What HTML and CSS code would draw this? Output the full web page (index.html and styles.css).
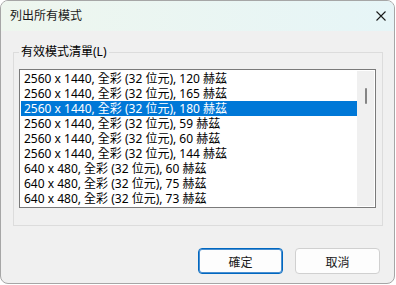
FILE: index.html
```html
<!DOCTYPE html>
<html lang="zh-Hant">
<head>
    <meta charset="UTF-8">
    <title>列出所有模式</title>
    <link rel="stylesheet" href="styles.css">
</head>
<body>
    <div class="window">
        <div class="titlebar">
            <span class="title">列出所有模式</span>
            <svg class="close" width="10" height="10" viewBox="0 0 10 10"><path d="M0.5 0.5L9.5 9.5M9.5 0.5L0.5 9.5" stroke="#1a1a1a" stroke-width="1.1" fill="none"/></svg>
        </div>
        <div class="content">
            <fieldset class="group">
                <legend>有效模式清單(L)</legend>
                <div class="listbox">
                    <div class="rows">
                        <div class="row">2560 x 1440, 全彩 (32 位元), 120 赫茲</div>
                        <div class="row">2560 x 1440, 全彩 (32 位元), 165 赫茲</div>
                        <div class="row selected">2560 x 1440, 全彩 (32 位元), 180 赫茲</div>
                        <div class="row">2560 x 1440, 全彩 (32 位元), 59 赫茲</div>
                        <div class="row">2560 x 1440, 全彩 (32 位元), 60 赫茲</div>
                        <div class="row">2560 x 1440, 全彩 (32 位元), 144 赫茲</div>
                        <div class="row">640 x 480, 全彩 (32 位元), 60 赫茲</div>
                        <div class="row">640 x 480, 全彩 (32 位元), 75 赫茲</div>
                        <div class="row">640 x 480, 全彩 (32 位元), 73 赫茲</div>
                    </div>
                    <div class="scrollbar"><div class="thumb"></div></div>
                </div>
            </fieldset>
            <div class="buttons">
                <button class="btn primary">確定</button>
                <button class="btn">取消</button>
            </div>
        </div>
    </div>
</body>
</html>
```

FILE: styles.css
```css
body { margin: 0; background: #ffffff; font-family: "Noto Sans", "Noto Sans CJK TC", sans-serif; font-size: 12px; color: #000; }
.window { width: 395px; height: 284px; box-sizing: border-box; border: 1px solid #a6a6a6; border-radius: 8px; overflow: hidden; background: #f0f0f0; display: flex; flex-direction: column; }
.titlebar { height: 30px; flex: none; display: flex; align-items: center; justify-content: space-between; padding: 0 8px 0 9px; background: linear-gradient(90deg, #eef6ee, #e6f5f7); }
.title { font-size: 12px; color: #1a1a1a; line-height: 16px; }
.close { display: block; }
.content { flex: 1; padding: 13px 11px 0 12px; display: flex; flex-direction: column; }
.group { margin: 0; padding: 9px 6px 17px 5px; border: 1px solid #dcdcdc; min-width: 0; }
.group legend { padding: 0 2px; line-height: 16px; }
.listbox { height: 139px; box-sizing: border-box; border: 1px solid #7a7a7a; background: #fff; padding: 1px; display: flex; }
.rows { flex: 1; overflow: hidden; }
.row { height: 15px; line-height: 15px; padding-left: 3px; white-space: nowrap; }
.row.selected { background: #0078d7; color: #fff; }
.scrollbar { width: 17px; background: #f0f0f0; padding-top: 17px; box-sizing: border-box; }
.thumb { width: 2px; height: 16px; margin-left: 8px; background: #858585; border-radius: 1px; }
.buttons { display: flex; justify-content: flex-end; gap: 12px; margin-top: 22px; padding-right: 3px; }
.btn { width: 85px; height: 26px; box-sizing: border-box; border: 1px solid #d0d0d0; border-radius: 4px; background: #fdfdfd; font-family: "Noto Sans CJK TC", sans-serif; font-size: 12px; color: #1a1a1a; padding: 0; }
.btn.primary { border-color: #0067c0; box-shadow: inset 0 0 0 1px #4a8fd0; }
```
